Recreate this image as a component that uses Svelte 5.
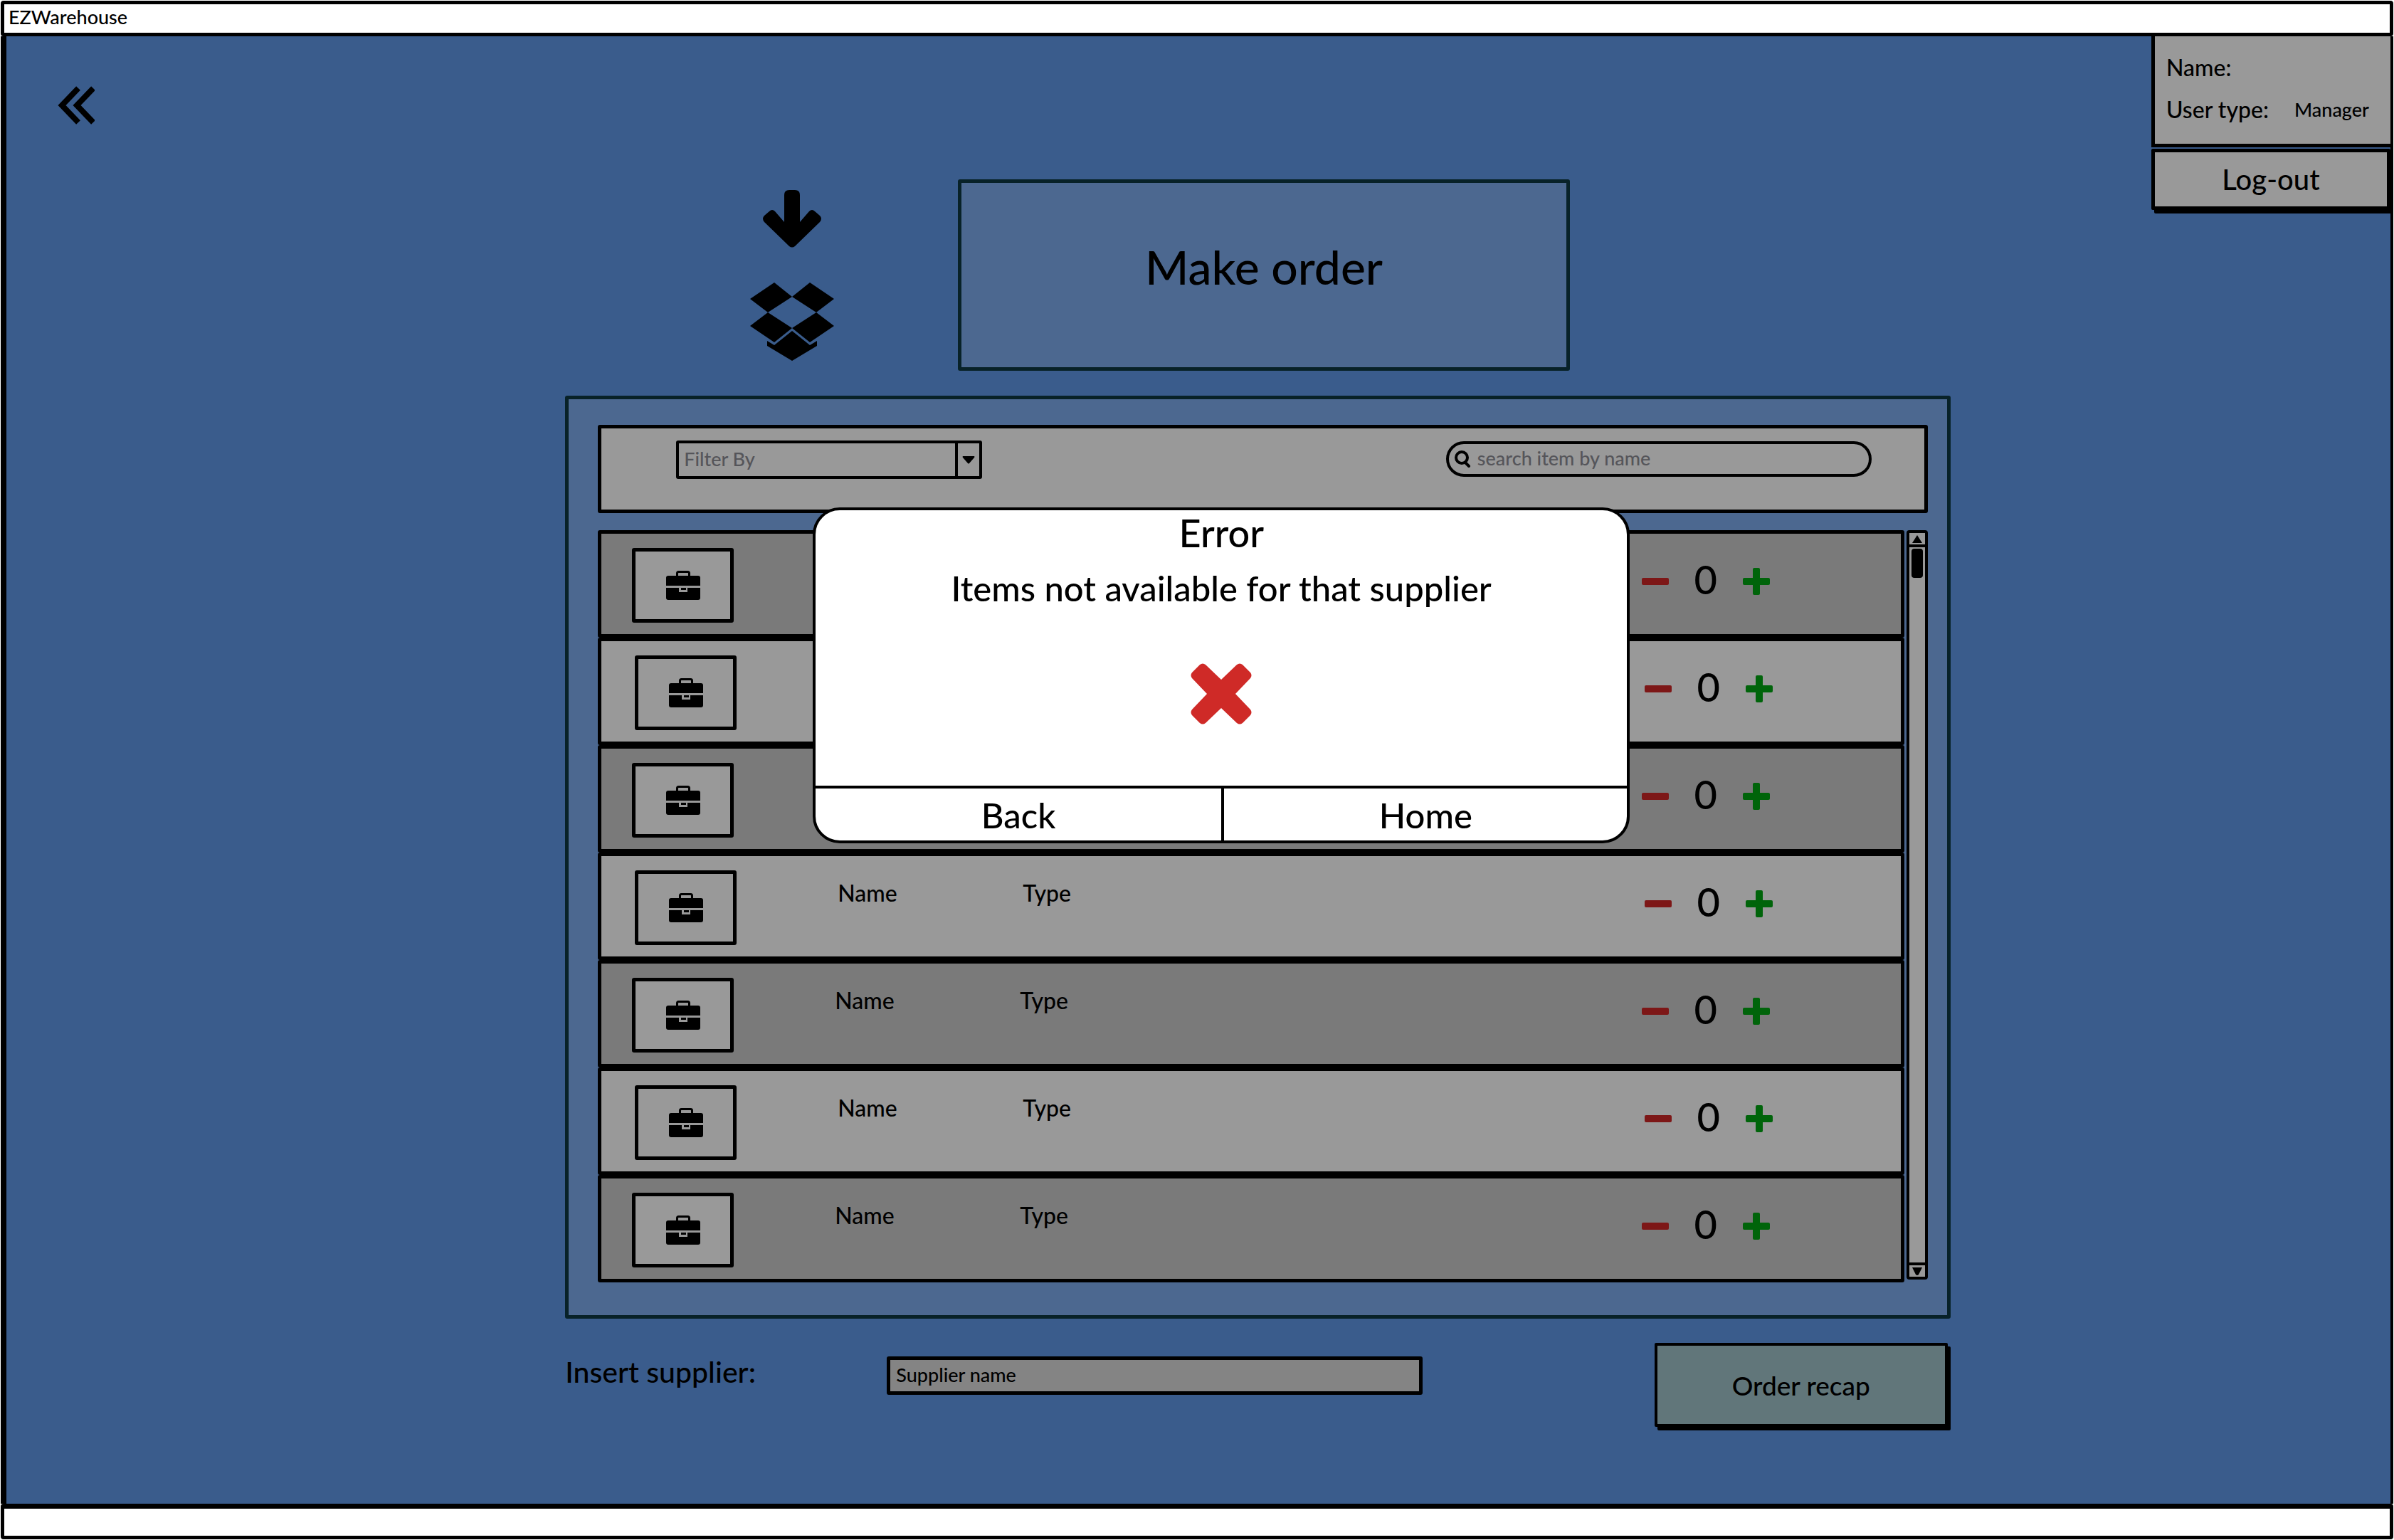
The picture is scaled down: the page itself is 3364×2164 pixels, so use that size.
<script>
  let items = $state([
    { id: 1, name: '', type: '', quantity: 0 },
    { id: 2, name: '', type: '', quantity: 0 },
    { id: 3, name: '', type: '', quantity: 0 },
    { id: 4, name: 'Name', type: 'Type', quantity: 0 },
    { id: 5, name: 'Name', type: 'Type', quantity: 0 },
    { id: 6, name: 'Name', type: 'Type', quantity: 0 },
    { id: 7, name: 'Name', type: 'Type', quantity: 0 }
  ]);
  let supplier = $state('Supplier name');
  let search = $state('');

  function step(item, amount) {
    item.quantity = Math.max(0, item.quantity + amount);
  }
</script>

<div class="window">
  <header class="titlebar">EZWarehouse</header>

  <main class="screen">
    <div class="side">
      <button class="back" aria-label="Go back">
        <svg viewBox="0 0 52 54" width="52" height="54" fill="none" stroke="#000" stroke-width="8" stroke-linejoin="miter">
          <path d="M29 3 L6 27 L29 51 M50 3 L27 27 L50 51" />
        </svg>
      </button>
    </div>

    <div class="content">
      <div class="hero">
        <div class="emblem">
          <svg viewBox="0 0 84 81" width="84" height="81" aria-hidden="true">
            <path
              d="M31 7 Q31 0 38 0 H46 Q53 0 53 7 V45 L66 30 Q70 26 74 30 L81 36 Q85 40 81 45 L46 79 Q42 82 38 79 L3 45 Q-1 40 3 36 L10 30 Q14 26 18 30 L31 45 Z"
            />
          </svg>
          <svg viewBox="0 0 118 110" width="118" height="110" aria-hidden="true">
            <path
              d="M34 0 L59 20 L25 42 L0 23 Z M84 0 L118 23 L93 42 L59 20 Z M25 42 L59 64 L34 84 L0 61 Z M93 42 L118 61 L84 84 L59 64 Z M59 68 L84 88 L94 82 V89 L59 110 L24 89 V82 L34 88 Z"
            />
          </svg>
        </div>
        <h1>Make order</h1>
      </div>

      <section class="panel" aria-label="Items">
        <div class="filters">
          <div class="select">
            <select aria-label="Filter By">
              <option>Filter By</option>
            </select>
            <span class="caret">
              <svg viewBox="0 0 18 11" width="18" height="11"><path d="M1 0 H17 Q18 1 17 2 L10 10 Q9 11 8 10 L1 2 Q0 1 1 0 Z" /></svg>
            </span>
          </div>
          <label class="search">
            <svg viewBox="0 0 24 24" width="24" height="24" fill="none" stroke="#000" stroke-width="4" stroke-linecap="round">
              <circle cx="11" cy="10" r="8" />
              <path d="M16 17 L21 22" />
            </svg>
            <input type="text" placeholder="search item by name" aria-label="search item by name" bind:value={search} />
          </label>
        </div>

        <div class="scroller">
          <ul class="items">
            {#each items as item (item.id)}
              <li class="item">
                <div class="thumb">
                  <svg viewBox="0 0 48 41" width="48" height="41">
                    <path d="M15.500 8 V3.500 Q15.500 1.500 17.500 1.500 H30.500 Q32.500 1.500 32.500 3.500 V8" fill="none" stroke="#000" stroke-width="3" />
                    <path d="M3 7 H45 Q48 7 48 10 V21 H0 V10 Q0 7 3 7 Z" />
                    <path d="M0 24 H18 V30 H30 V24 H48 V38 Q48 41 45 41 H3 Q0 41 0 38 Z" />
                    <path d="M21 24 H28 V27 H21 Z" />
                  </svg>
                </div>
                <span class="name">{item.name}</span>
                <span class="type">{item.type}</span>
                <div class="stepper">
                  <button aria-label="Remove one" onclick={() => step(item, -1)}>
                    <svg viewBox="0 0 38 38" width="38" height="38"><rect y="14" width="38" height="10" rx="2" fill="#7d1717" /></svg>
                  </button>
                  <output>{item.quantity}</output>
                  <button aria-label="Add one" onclick={() => step(item, 1)}>
                    <svg viewBox="0 0 38 38" width="38" height="38" fill="#00640a">
                      <rect y="14" width="38" height="10" rx="2" />
                      <rect x="14" width="10" height="38" rx="2" />
                    </svg>
                  </button>
                </div>
              </li>
            {/each}
          </ul>
          <div class="scrollbar">
            <button aria-label="Scroll up">
              <svg viewBox="0 0 14 11" width="14" height="11"><path d="M7 0 L14 11 H0 Z" /></svg>
            </button>
            <div class="track"><div class="handle"></div></div>
            <button aria-label="Scroll down">
              <svg viewBox="0 0 14 11" width="14" height="11"><path d="M0 0 H14 L9 10 Q7 12 5 10 Z" /></svg>
            </button>
          </div>
        </div>

        <dialog open aria-labelledby="error-title">
          <div class="message">
            <h2 id="error-title">Error</h2>
            <p>Items not available for that supplier</p>
            <svg viewBox="0 0 86 86" width="86" height="86" aria-hidden="true">
              <path
                fill="#cf2a27"
                d="M13 2 Q17 -1 21 2 L43 23 L65 2 Q69 -1 73 2 L84 13 Q87 17 84 21 L63 43 L84 65 Q87 69 84 73 L73 84 Q69 87 65 84 L43 63 L21 84 Q17 87 13 84 L2 73 Q-1 69 2 65 L23 43 L2 21 Q-1 17 2 13 Z"
              />
            </svg>
          </div>
          <div class="actions">
            <button>Back</button>
            <button>Home</button>
          </div>
        </dialog>
      </section>

      <div class="order">
        <label for="supplier">Insert supplier:</label>
        <input id="supplier" type="text" bind:value={supplier} />
        <button class="recap">Order recap</button>
      </div>
    </div>

    <aside class="account">
      <dl>
        <dt>Name:</dt>
        <dd></dd>
        <dt>User type:</dt>
        <dd>Manager</dd>
      </dl>
      <button class="logout">Log-out</button>
    </aside>
  </main>

  <footer class="statusbar"></footer>
</div>

<style>
  :global(body) {
    margin: 0;
    background: #fff;
  }

  .window,
  .window * {
    box-sizing: border-box;
  }

  .window {
    display: flex;
    flex-direction: column;
    min-height: 100vh;
    padding: 1px;
    color: #000;
    font-family: Lato, 'Open Sans', sans-serif;
    font-size: 32px;
    font-weight: 500;
  }

  button,
  input,
  select {
    margin: 0;
    padding: 0;
    border: 0;
    border-radius: 0;
    background: none;
    color: inherit;
    font: inherit;
  }

  button {
    cursor: pointer;
  }

  svg {
    display: block;
    flex: none;
  }

  h1,
  h2,
  p,
  dl,
  dd,
  ul {
    margin: 0;
    padding: 0;
    font-weight: inherit;
  }

  .titlebar,
  .statusbar {
    border: 5px solid #000;
    border-radius: 4px;
    background: #fff;
  }

  .titlebar {
    height: 50px;
    padding-left: 6px;
    font-size: 27px;
    line-height: 36px;
  }

  .statusbar {
    height: 50px;
    border-top-width: 7px;
  }

  .screen {
    flex: 1;
    display: grid;
    grid-template-columns: 785fr 1946fr 618fr;
    border: 0 solid #000;
    border-width: 0 4px 0 8px;
    background: #3a5c8c;
  }

  .side {
    padding: 70px 72px;
  }

  .content {
    display: flex;
    flex-direction: column;
    padding-top: 201px;
  }

  .hero {
    display: grid;
    grid-template-columns: 552fr 859fr 535fr;
  }

  .emblem {
    display: flex;
    flex-direction: column;
    align-items: center;
    gap: 49px;
    padding: 15px 0 0 86px;
  }

  h1 {
    height: 269px;
    border: 5px solid #082228;
    border-radius: 3px;
    background: #4c6890;
    font-size: 66px;
    line-height: 236px;
    text-align: center;
  }

  .panel {
    position: relative;
    margin-top: 35px;
    padding: 36px 27px 46px 41px;
    border: 5px solid #082228;
    border-radius: 3px;
    background: #4c6890;
  }

  .filters {
    display: flex;
    justify-content: space-between;
    height: 124px;
    padding: 17px 74px 0 105px;
    border: 5px solid #000;
    border-radius: 3px;
    background: #999;
    color: #55555a;
    font-size: 27px;
  }

  .select {
    display: flex;
    width: 430px;
    height: 54px;
    border: 4px solid #000;
    border-radius: 3px;
  }

  select {
    flex: 1;
    padding: 0 7px 4px;
    appearance: none;
    outline: none;
  }

  .caret {
    display: grid;
    place-items: center;
    width: 34px;
    border-left: 4px solid #000;
    pointer-events: none;
  }

  .search {
    display: flex;
    align-items: center;
    gap: 9px;
    width: 598px;
    height: 50px;
    margin-top: 1px;
    padding-left: 7px;
    border: 4px solid #000;
    border-radius: 25px;
  }

  .search input {
    flex: 1;
    min-width: 0;
    padding-bottom: 4px;
    outline: none;
  }

  .search input::placeholder {
    color: #55555a;
    opacity: 1;
  }

  .scroller {
    display: flex;
    align-items: flex-start;
    gap: 3px;
    margin-top: 24px;
  }

  .items {
    flex: 1;
    list-style: none;
  }

  .item {
    display: grid;
    grid-template-columns: 285px 260px 1fr 364px;
    height: 151px;
    padding-left: 43px;
    border: 5px solid #000;
    border-radius: 3px;
    background: #7a7a7a;
  }

  .item:nth-child(even) {
    padding-left: 47px;
    grid-template-columns: 285px 260px 1fr 360px;
    background: #999;
  }

  .thumb {
    display: grid;
    place-items: center;
    width: 143px;
    height: 105px;
    margin-top: 20px;
    border: 5px solid #000;
    border-radius: 3px;
    background: #999;
  }

  .name,
  .type {
    padding-top: 34px;
    line-height: 36px;
  }

  .stepper {
    grid-column: 4;
    display: flex;
    align-items: flex-start;
    padding-top: 48px;
  }

  output {
    width: 104px;
    margin-top: -16px;
    font-size: 56px;
    line-height: 64px;
    text-align: center;
  }

  .scrollbar {
    display: flex;
    flex-direction: column;
    align-self: stretch;
    width: 30px;
    margin-bottom: 4px;
    border: 4px solid #000;
    border-radius: 4px;
    background: #999;
  }

  .scrollbar button {
    display: grid;
    place-items: center;
    height: 16px;
  }

  .track {
    flex: 1;
    padding: 2px 3px;
    border: 0 solid #000;
    border-width: 4px 0;
  }

  .handle {
    height: 41px;
    border-radius: 4px;
    background: #000;
  }

  dialog {
    position: absolute;
    top: 152px;
    left: 17.7%;
    width: 59.3%;
    margin: 0;
    padding: 0;
    border: 4px solid #000;
    border-radius: 38px;
    background: #fff;
    color: #000;
    overflow: hidden;
    font-size: 49px;
    line-height: 64px;
  }

  .message {
    display: flex;
    flex-direction: column;
    align-items: center;
    padding-bottom: 86px;
    border-bottom: 4px solid #000;
  }

  h2 {
    font-size: 54px;
  }

  .message p {
    margin: 13px 0 74px;
  }

  .actions {
    display: grid;
    grid-template-columns: 1fr 1fr;
  }

  .actions button {
    height: 73px;
  }

  .actions button + button {
    border-left: 4px solid #000;
  }

  .order {
    display: grid;
    grid-template-columns: 452fr 752fr 326fr 416fr;
    align-items: start;
    margin-top: 34px;
    font-size: 41px;
  }

  .order label {
    padding-top: 17px;
    line-height: 48px;
  }

  .order input {
    height: 54px;
    margin-top: 19px;
    padding: 0 8px 3px;
    border: 5px solid #000;
    border-radius: 3px;
    background: #848484;
    font-size: 27px;
    outline: none;
  }

  .recap {
    grid-column: 4;
    height: 118px;
    margin-right: 4px;
    border: 4px solid #000;
    border-radius: 2px;
    background: #61767a;
    box-shadow: 4px 5px 0 #000;
    font-size: 37px;
  }

  .account {
    justify-self: end;
    width: 336px;
  }

  dl {
    display: grid;
    grid-template-columns: 180px 1fr;
    align-content: start;
    row-gap: 15px;
    height: 156px;
    padding: 22px 0 0 16px;
    border: 0 solid #000;
    border-width: 0 0 5px 5px;
    background: #999;
    line-height: 44px;
  }

  dl dd {
    font-size: 27px;
  }

  .logout {
    width: 100%;
    height: 86px;
    margin-top: 2px;
    border: 5px solid #000;
    border-radius: 2px;
    background: #999;
    box-shadow: 4px 5px 0 #000;
    font-size: 40px;
  }
</style>
